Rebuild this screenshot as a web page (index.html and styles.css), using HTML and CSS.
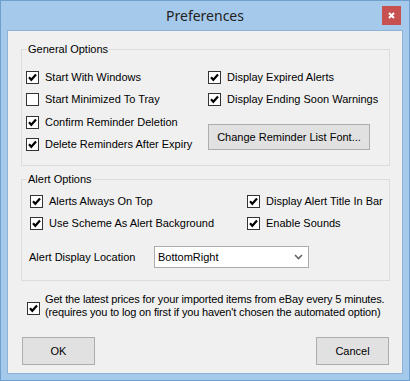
FILE: index.html
```html
<!DOCTYPE html>
<html lang="en">
<head>
    <meta charset="UTF-8">
    <title>Preferences</title>
    <link rel="stylesheet" href="styles.css">
</head>
<body>
    <div class="window">
        <div class="titlebar">
            <span></span>
            <div class="title">Preferences</div>
            <div class="close">
                <svg width="7" height="7" viewBox="0 0 7 7"><path d="M1 1L6 6M6 1L1 6" stroke="#fff" stroke-width="2"/></svg>
            </div>
        </div>

        <div class="client">
            <fieldset class="group general">
                <legend>General Options</legend>
                <div class="group-body cols-general">
                    <div class="col">
                        <div class="check on"><span class="box"></span>Start With Windows</div>
                        <div class="check"><span class="box"></span>Start Minimized To Tray</div>
                        <div class="check on"><span class="box"></span>Confirm Reminder Deletion</div>
                        <div class="check on"><span class="box"></span>Delete Reminders After Expiry</div>
                    </div>
                    <div class="col">
                        <div class="check on"><span class="box"></span>Display Expired Alerts</div>
                        <div class="check on"><span class="box"></span>Display Ending Soon Warnings</div>
                        <button class="btn font-btn">Change Reminder List Font...</button>
                    </div>
                </div>
            </fieldset>

            <fieldset class="group alert">
                <legend>Alert Options</legend>
                <div class="group-body">
                    <div class="cols-alert">
                        <div class="col">
                            <div class="check on"><span class="box"></span>Alerts Always On Top</div>
                            <div class="check on"><span class="box"></span>Use Scheme As Alert Background</div>
                        </div>
                        <div class="col">
                            <div class="check on"><span class="box"></span>Display Alert Title In Bar</div>
                            <div class="check on"><span class="box"></span>Enable Sounds</div>
                        </div>
                    </div>
                    <div class="location">
                        <label>Alert Display Location</label>
                        <div class="combo">
                            <span>BottomRight</span>
                            <svg width="9" height="6" viewBox="0 0 9 6"><path d="M1 1L4.5 4.5L8 1" fill="none" stroke="#666" stroke-width="1.6"/></svg>
                        </div>
                    </div>
                </div>
            </fieldset>

            <div class="check ebay on">
                <span class="box"></span>
                <div>Get the latest prices for your imported items from eBay every 5 minutes.<br>(requires you to log on first if you haven't chosen the automated option)</div>
            </div>

            <div class="actions">
                <button class="btn dlg-btn">OK</button>
                <button class="btn dlg-btn">Cancel</button>
            </div>
        </div>
    </div>
</body>
</html>
```

FILE: styles.css
```css
body {
    margin: 0;
    font-family: "Liberation Sans", Arial, sans-serif;
    font-size: 11px;
    color: #000;
}
.window {
    width: 410px;
    height: 381px;
    box-sizing: border-box;
    background: #a4c9eb;
    border: 1px solid #6f9fcf;
    padding: 0 6px 6px;
    display: flex;
    flex-direction: column;
}
.titlebar {
    height: 29px;
    display: grid;
    grid-template-columns: 1fr auto 1fr;
    align-items: start;
}
.title {
    font-family: "Noto Sans", sans-serif;
    font-size: 14px;
    color: #222;
    line-height: 20px;
    padding-top: 5px;
}
.close {
    justify-self: end;
    margin: 5px 2px 0 0;
    width: 19px;
    height: 19px;
    background: #c75050;
    display: flex;
    align-items: center;
    justify-content: center;
}
.client {
    flex: 1;
    background: #f0f0f0;
    border: 1px solid #8eb3d7;
    display: flex;
    flex-direction: column;
}
.group {
    border: 1px solid #dcdcdc;
    padding: 0;
    margin: 0 12px 0 13px;
    min-width: 0;
}
.group legend {
    line-height: 13px;
    padding: 0 1px;
    margin-left: 5px;
}
.general { margin-top: 12px; }
.alert { margin-top: 7px; }
.group-body { display: flex; }
.cols-general {
    padding: 10px 0 9px 4px;
}
.cols-general .col:first-child { width: 182px; }
.col {
    display: flex;
    flex-direction: column;
}
.check {
    height: 22.5px;
    display: flex;
    align-items: center;
    white-space: nowrap;
    line-height: 13px;
}
.box {
    width: 11px;
    height: 11px;
    border: 1px solid #333;
    background: #fff;
    margin-right: 6px;
    flex: none;
}
.check.on .box {
    background: #fff url("data:image/svg+xml,%3Csvg xmlns='http://www.w3.org/2000/svg' width='11' height='11'%3E%3Cpath d='M2 5.3L4.3 7.8L9 2.6' fill='none' stroke='%23000' stroke-width='2.2'/%3E%3C/svg%3E") no-repeat;
}
.btn {
    font-family: "Liberation Sans", Arial, sans-serif;
    font-size: 11px;
    color: #000;
    background: #e1e1e1;
    border: 1px solid #adadad;
    padding: 0;
}
.font-btn {
    margin-top: 13px;
    width: 162px;
    height: 26px;
}
.alert .group-body {
    flex-direction: column;
    padding: 4px 0 12px 8px;
}
.cols-alert { display: flex; }
.cols-alert .col:first-child { width: 217px; }
.location {
    display: flex;
    align-items: center;
    margin-top: 11px;
}
.location label {
    width: 125px;
    margin-left: -1px;
}
.combo {
    width: 145px;
    height: 20px;
    background: #fff;
    border: 1px solid #acacac;
    display: flex;
    align-items: center;
    justify-content: space-between;
    padding: 0 5px 0 3px;
}
.check.ebay {
    height: auto;
    margin: 12px 0 0 19px;
    line-height: 12.5px;
    letter-spacing: -0.15px;
}
.check.ebay .box { margin: 5px 5px 0 0; }
.actions {
    margin-top: auto;
    padding: 0 13px 8px 14px;
    display: flex;
    justify-content: space-between;
}
.dlg-btn {
    width: 73px;
    height: 28px;
}
```
